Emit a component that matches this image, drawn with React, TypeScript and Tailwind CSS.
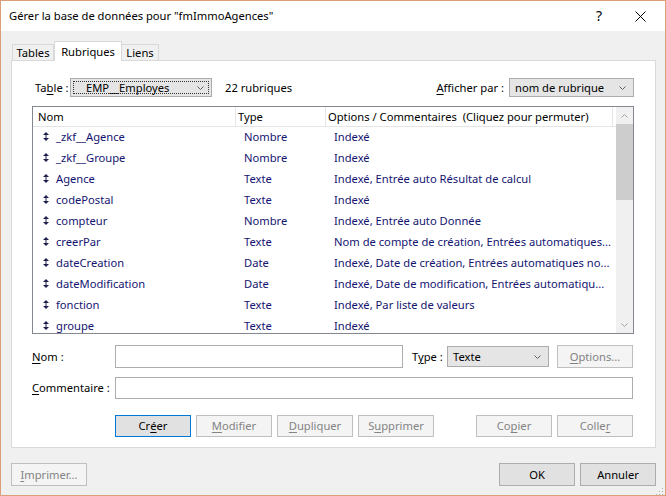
import React from "react";

const rows = [
  ["_zkf__Agence", "Nombre", "Indexé"],
  ["_zkf__Groupe", "Nombre", "Indexé"],
  ["Agence", "Texte", "Indexé, Entrée auto Résultat de calcul"],
  ["codePostal", "Texte", "Indexé"],
  ["compteur", "Nombre", "Indexé, Entrée auto Donnée"],
  ["creerPar", "Texte", "Nom de compte de création, Entrées automatiques..."],
  ["dateCreation", "Date", "Indexé, Date de création, Entrées automatiques no..."],
  ["dateModification", "Date", "Indexé, Date de modification, Entrées automatiqu..."],
  ["fonction", "Texte", "Indexé, Par liste de valeurs"],
  ["groupe", "Texte", "Indexé"],
];

function Chevron({ className = "" }: { className?: string }) {
  return (
    <svg width="7" height="4" viewBox="0 0 7 4" className={className}>
      <path d="M0.5 0.5 L3.5 3.5 L6.5 0.5" fill="none" stroke="#606060" strokeWidth="1" />
    </svg>
  );
}

function Updown() {
  return (
    <svg width="6" height="9" viewBox="0 0 6 9">
      <path d="M3 0 L6 3 L0 3 Z" fill="#202050" />
      <path d="M3 9 L6 6 L0 6 Z" fill="#202050" />
      <rect x="2.5" y="3" width="1" height="3" fill="#202050" />
    </svg>
  );
}

function Btn({
  children,
  disabled,
  focused,
  className = "",
}: {
  children: React.ReactNode;
  disabled?: boolean;
  focused?: boolean;
  className?: string;
}) {
  const style = focused
    ? "border-[#0078d7] bg-[#e1e1e1] text-black"
    : disabled
    ? "border-[#bfbfbf] bg-[#f4f4f4] text-[#838383]"
    : "border-[#adadad] bg-[#e1e1e1] text-black";
  return (
    <div className={`w-[76px] h-[22px] border flex items-center justify-center shrink-0 whitespace-nowrap ${style} ${className}`}>
      {children}
    </div>
  );
}

const U = ({ children }: { children: React.ReactNode }) => <span className="underline underline-offset-2">{children}</span>;

export default function App() {
  return (
    <div className="w-[666px] h-[496px] border border-[#dba07a] bg-[#f0f0f0] flex flex-col text-[11.2px] leading-none text-black font-['Noto_Sans',sans-serif] overflow-hidden whitespace-nowrap">
      {/* title bar */}
      <div className="h-[30px] bg-white flex items-center shrink-0">
        <span className="ml-[8px] text-[11.2px]">Gérer la base de données pour "fmImmoAgences"</span>
        <span className="ml-auto text-[14px] mr-[33px]">?</span>
        <svg width="11" height="11" viewBox="0 0 11 11" className="mr-[19px]">
          <path d="M0.5 0.5 L10.5 10.5 M10.5 0.5 L0.5 10.5" stroke="#000" strokeWidth="1" />
        </svg>
      </div>

      <div className="px-[10px] flex flex-col">
        {/* tabs */}
        <div className="flex items-end h-[29px] pl-[1px]">
          <div className="w-[42px] h-[16px] border border-b-0 border-[#d9d9d9] bg-[#f0f0f0] flex items-center justify-center">Tables</div>
          <div className="w-[68px] h-[20px] border border-b-0 border-[#d9d9d9] bg-white flex items-center justify-center -mb-[1px] relative z-10">Rubriques</div>
          <div className="w-[37px] h-[16px] border border-b-0 border-l-0 border-[#d9d9d9] bg-[#f0f0f0] flex items-center justify-center">Liens</div>
        </div>

        {/* panel */}
        <div className="w-[645px] h-[388px] border border-[#d9d9d9] bg-white pt-[17px] pl-[20px] pr-[21px] flex flex-col">
          <div className="h-[19px] flex items-center">
            <span className="w-[38px] pl-[3px]">Ta<U>b</U>le :</span>
            <div className="w-[142px] h-[19px] border border-[#acacac] bg-[#e5e5e5] p-[2px]">
              <div className="h-full border border-dotted border-[#333] flex items-center pl-[12px] pr-[4px]">
                <span>EMP__Employes</span>
                <Chevron className="ml-auto" />
              </div>
            </div>
            <span className="ml-[13px]">22 rubriques</span>
            <span className="ml-auto mr-[5px]"><U>A</U>fficher par :</span>
            <div className="w-[125px] h-[19px] border border-[#acacac] bg-[#e5e5e5] flex items-center pl-[5px] pr-[7px]">
              <span>nom de rubrique</span>
              <Chevron className="ml-auto" />
            </div>
          </div>

          {/* list */}
          <div className="mt-[9px] h-[228px] border border-[#828790] flex overflow-hidden">
            <div className="flex-1 flex flex-col overflow-hidden">
              <div className="h-[20px] flex shrink-0 border-b border-[#e5e5e5]">
                <div className="w-[203px] pl-[5px] flex items-center border-r border-[#e5e5e5]">Nom</div>
                <div className="w-[90px] pl-[2px] flex items-center border-r border-[#e5e5e5]">Type</div>
                <div className="w-[287px] pl-[2px] flex items-center border-r border-[#e5e5e5] whitespace-pre">Options / Commentaires  (Cliquez pour permuter)</div>
              </div>
              {rows.map(([nom, type, opt]) => (
                <div key={nom} className="h-[21px] pb-[2px] flex items-center shrink-0 text-[#141470]">
                  <div className="w-[203px] flex items-center">
                    <span className="ml-[10px] mr-[7px] flex"><Updown /></span>
                    <span>{nom}</span>
                  </div>
                  <div className="w-[90px] pl-[8px]">{type}</div>
                  <div className="w-[287px] pl-[8px] whitespace-nowrap">{opt}</div>
                </div>
              ))}
            </div>
            <div className="w-[17px] bg-[#f0f0f0] flex flex-col shrink-0">
              <div className="h-[17px] flex items-center justify-center">
                <svg width="7" height="4" viewBox="0 0 7 4"><path d="M0.5 3.5 L3.5 0.5 L6.5 3.5" fill="none" stroke="#a3a3a3" /></svg>
              </div>
              <div className="h-[76px] bg-[#cdcdcd]" />
              <div className="flex-1" />
              <div className="h-[17px] flex items-center justify-center">
                <svg width="7" height="4" viewBox="0 0 7 4"><path d="M0.5 0.5 L3.5 3.5 L6.5 0.5" fill="none" stroke="#a3a3a3" /></svg>
              </div>
            </div>
          </div>

          {/* Nom row */}
          <div className="mt-[11px] h-[23px] flex items-center">
            <span className="w-[83px]"><U>N</U>om :</span>
            <div className="w-[288px] h-[23px] border border-[#adadad] bg-white" />
            <span className="ml-[9px] w-[35px]">T<U>y</U>pe :</span>
            <div className="w-[102px] h-[21px] border border-[#acacac] bg-[#e5e5e5] flex items-center pl-[5px] pr-[7px]">
              <span>Texte</span>
              <Chevron className="ml-auto" />
            </div>
            <Btn disabled className="ml-auto mr-[1px] h-[23px]"><U>O</U>ptions...</Btn>
          </div>

          {/* Commentaire row */}
          <div className="mt-[9px] h-[22px] flex items-center">
            <span className="w-[83px]"><U>C</U>ommentaire :</span>
            <div className="w-[518px] h-[22px] border border-[#adadad] bg-white" />
          </div>

          {/* buttons */}
          <div className="mt-[16px] flex pl-[83px]">
            <Btn focused>Cr<U>é</U>er</Btn>
            <Btn disabled className="ml-[5px]"><U>M</U>odifier</Btn>
            <Btn disabled className="ml-[5px]"><U>D</U>upliquer</Btn>
            <Btn disabled className="ml-[5px]">S<U>u</U>pprimer</Btn>
            <Btn disabled className="ml-[42px]">Co<U>p</U>ier</Btn>
            <Btn disabled className="ml-[5px]">Colle<U>r</U></Btn>
          </div>
        </div>

        {/* footer */}
        <div className="mt-[15px] flex">
          <Btn disabled className="h-[23px]"><U>I</U>mprimer...</Btn>
          <Btn className="ml-auto h-[23px]">OK</Btn>
          <Btn className="ml-[5px] h-[23px] -mr-[1px]">Annuler</Btn>
        </div>
      </div>
      <div className="flex-1 flex justify-end items-end">
        <svg width="10" height="10" viewBox="0 0 10 10" className="mr-[1px] mb-[1px]">
          {[[8, 2], [8, 5], [5, 5], [8, 8], [5, 8], [2, 8]].map(([x, y], i) => (
            <rect key={i} x={x} y={y} width="1" height="1" fill="#b0b0b0" />
          ))}
        </svg>
      </div>
    </div>
  );
}
